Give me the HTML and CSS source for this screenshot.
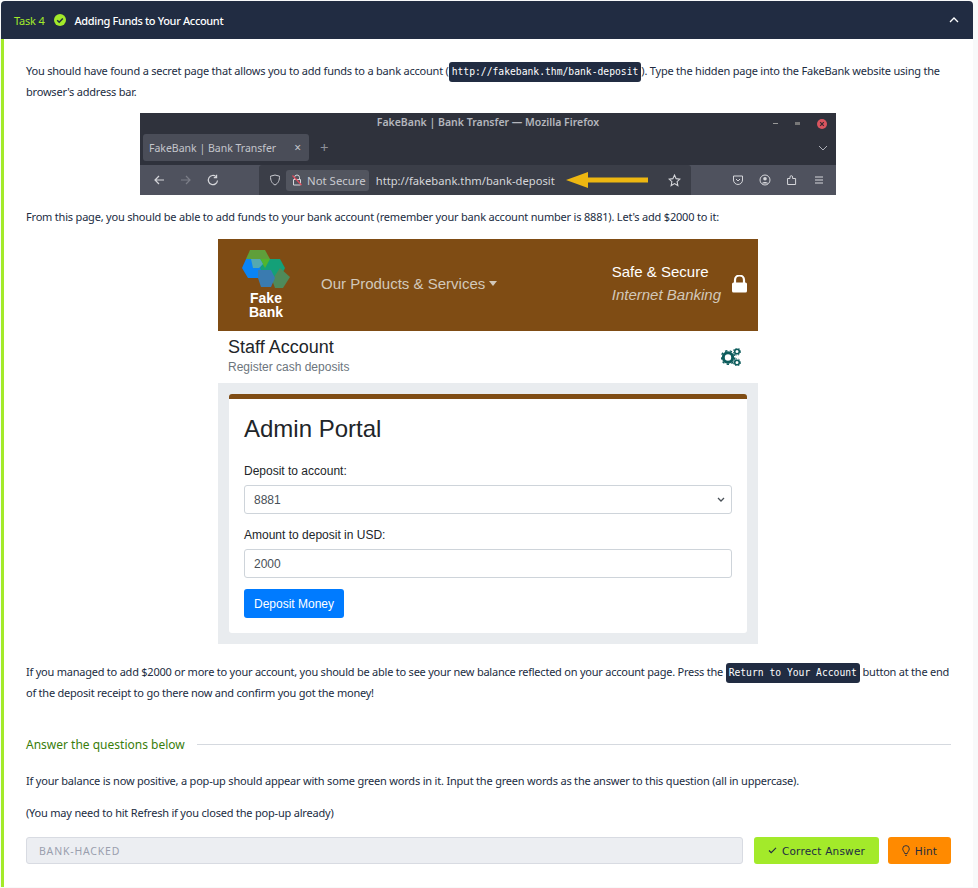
FILE: index.html
```html
<!DOCTYPE html>
<html lang="en">
<head>
    <meta charset="UTF-8">
    <meta name="viewport" content="width=device-width, initial-scale=1.0">
    <title>Task 4 - Adding Funds to Your Account</title>
    <link rel="stylesheet" href="styles.css">
</head>
<body>
    <section class="task">
        <header class="task-head">
            <span class="task-num">Task 4</span>
            <svg class="task-check" viewBox="0 0 12 12"><circle cx="6" cy="6" r="6" fill="#a3ea2a"/><path d="M3.2 6.2l2 2 3.6-3.8" fill="none" stroke="#212c42" stroke-width="1.5"/></svg>
            <span class="task-title">Adding Funds to Your Account</span>
            <svg class="task-chevron" viewBox="0 0 10 6"><path d="M1 5l4-4 4 4" fill="none" stroke="#fff" stroke-width="1.3"/></svg>
        </header>
        <div class="task-body">
            <p class="text text-first">You should have found a secret page that allows you to add funds to a bank account (<code>http://fakebank.thm/bank-deposit</code>). Type the hidden page into the FakeBank website using the browser's address bar.</p>

            <div class="firefox">
                <div class="ff-title">
                    <span class="ff-title-text">FakeBank | Bank Transfer — Mozilla Firefox</span>
                    <div class="ff-winbtns">
                        <i class="ff-min"></i>
                        <i class="ff-max"></i>
                        <svg class="ff-close" viewBox="0 0 10 10"><circle cx="5" cy="5" r="5" fill="#d9555f"/><path d="M3.2 3.2l3.6 3.6M6.8 3.2l-3.6 3.6" stroke="#3a2a30" stroke-width="1.2"/></svg>
                    </div>
                </div>
                <div class="ff-tabs">
                    <div class="ff-tab"><span>FakeBank | Bank Transfer</span><b>×</b></div>
                    <span class="ff-plus">+</span>
                    <svg class="ff-alltabs" viewBox="0 0 10 6"><path d="M1 1l4 4 4-4" fill="none" stroke="#aeb0b8" stroke-width="1"/></svg>
                </div>
                <div class="ff-toolbar">
                    <div class="ff-nav">
                        <svg viewBox="0 0 12 12"><path d="M11 6H2M6 2L2 6l4 4" fill="none" stroke="#d5d6da" stroke-width="1.2"/></svg>
                        <svg viewBox="0 0 12 12"><path d="M1 6h9M6 2l4 4-4 4" fill="none" stroke="#7c7e88" stroke-width="1.2"/></svg>
                        <svg viewBox="0 0 12 12"><path d="M10.5 6.5A4.6 4.6 0 1 1 9 2.6M9.6 0.8v2.8H6.8" fill="none" stroke="#d5d6da" stroke-width="1.2"/></svg>
                    </div>
                    <div class="ff-url">
                        <svg class="ff-shield" viewBox="0 0 12 12"><path d="M6 1l4.5 1.2c0 4-1 7-4.5 8.8C2.500 9.200 1.500 6.200 1.500 2.200z" fill="none" stroke="#c9cad0" stroke-width="1"/></svg>
                        <div class="ff-secure">
                            <svg viewBox="0 0 12 12"><path d="M3.500 5V3.500a2.500 2.500 0 0 1 5 0V5M2.500 5.500h7v5.500h-7z" fill="none" stroke="#d5d6da" stroke-width="1"/><path d="M1.500 1.500l9 9.500" stroke="#e0485a" stroke-width="1.200"/></svg>
                            <span>Not Secure</span>
                        </div>
                        <span class="ff-address">http://fakebank.thm/bank-deposit</span>
                        <svg class="ff-arrow" viewBox="0 0 82 16"><path d="M0 8L22 0v5.500h60v5H22V16z" fill="#eeb711"/></svg>
                        <svg class="ff-star" viewBox="0 0 12 12"><path d="M6 1l1.500 3.300 3.500.4-2.600 2.400.7 3.600L6 8.900l-3.100 1.800.7-3.600L1 4.700l3.500-.4z" fill="none" stroke="#d5d6da" stroke-width="1"/></svg>
                    </div>
                    <div class="ff-tools">
                        <svg viewBox="0 0 12 12"><path d="M1.500 2h9v4a4.500 4.500 0 0 1-9 0z" fill="none" stroke="#d5d6da" stroke-width="1"/><path d="M4 5l2 2 2-2" fill="none" stroke="#d5d6da" stroke-width="1"/></svg>
                        <svg viewBox="0 0 12 12"><circle cx="6" cy="6" r="5" fill="none" stroke="#d5d6da" stroke-width="1"/><circle cx="6" cy="4.800" r="1.800" fill="#d5d6da"/><path d="M2.800 9.500c1-2 5.400-2 6.400 0" fill="#d5d6da"/></svg>
                        <svg viewBox="0 0 12 12"><path d="M1.500 4.500h2.500V3a1.300 1.300 0 0 1 2.600 0v1.500h3v6h-8z" fill="none" stroke="#d5d6da" stroke-width="1"/></svg>
                        <svg viewBox="0 0 12 12"><path d="M2 3h8M2 6h8M2 9h8" stroke="#d5d6da" stroke-width="1.100"/></svg>
                    </div>
                </div>
            </div>

            <p class="text">From this page, you should be able to add funds to your bank account (remember your bank account number is 8881). Let's add $2000 to it:</p>

            <div class="bank">
                <div class="bank-nav">
                    <div class="bank-logo">
                        <svg viewBox="0 0 48 38">
                            <path d="M8 0h15l5 9-5 9H8L4 9z" fill="#5f9f3a"/>
                            <path d="M4 9h17l7 9-5 10H6L0 18z" fill="#0a84f5"/>
                            <path d="M23 9h15l5 9-6 12H23l-5-12z" fill="#14a078"/>
                            <path d="M38 18l10 9-7 11h-8l-3-8z" fill="#4f8a5a"/>
                            <path d="M16 20h13l4 8-4 9H19l-3-9z" fill="#3a7bb0"/>
                            <path d="M18 9h10l-5 9z" fill="#4fb52e"/>
                            <path d="M9 9h9l3 5-4 4h-6z" fill="#55a9b0"/>
                        </svg>
                        <span>Fake<br>Bank</span>
                    </div>
                    <div class="bank-menu">Our Products &amp; Services<i></i></div>
                    <div class="bank-safe">
                        <span>Safe &amp; Secure</span>
                        <em>Internet Banking</em>
                    </div>
                    <svg class="bank-lock" viewBox="0 0 15 18"><path d="M3 8V5a4.500 4.500 0 0 1 9 0v3" fill="none" stroke="#fff" stroke-width="2.200"/><rect y="7.500" width="15" height="10" rx="1.500" fill="#fff"/></svg>
                </div>
                <div class="bank-staff">
                    <div>
                        <div class="staff-title">Staff Account</div>
                        <div class="staff-sub">Register cash deposits</div>
                    </div>
                    <svg class="staff-gears" viewBox="0 0 20 18">
                        <circle cx="7" cy="9.500" r="4.700" fill="none" stroke="#0d5c5c" stroke-width="3"/>
                        <circle cx="7" cy="9.500" r="6.800" fill="none" stroke="#0d5c5c" stroke-width="1.400" stroke-dasharray="2.400 2.400"/>
                        <circle cx="16" cy="3.500" r="2.300" fill="none" stroke="#0d5c5c" stroke-width="1.600"/>
                        <circle cx="16" cy="14.500" r="2.300" fill="none" stroke="#0d5c5c" stroke-width="1.600"/>
                        <circle cx="16" cy="3.500" r="3.600" fill="none" stroke="#0d5c5c" stroke-width="1" stroke-dasharray="1.500 1.500"/>
                        <circle cx="16" cy="14.500" r="3.600" fill="none" stroke="#0d5c5c" stroke-width="1" stroke-dasharray="1.500 1.500"/>
                    </svg>
                </div>
                <div class="bank-panel">
                    <div class="bank-card">
                        <div class="card-title">Admin Portal</div>
                        <div class="card-label">Deposit to account:</div>
                        <div class="card-field">8881<svg viewBox="0 0 8 5"><path d="M1 1l3 3 3-3" fill="none" stroke="#495057" stroke-width="1.300"/></svg></div>
                        <div class="card-label">Amount to deposit in USD:</div>
                        <div class="card-field">2000</div>
                        <div class="card-btn">Deposit Money</div>
                    </div>
                </div>
            </div>

            <p class="text text-tight">If you managed to add $2000 or more to your account, you should be able to see your new balance reflected on your account page. Press the <code>Return to Your Account</code> button at the end of the deposit receipt to go there now and confirm you got the money!</p>

            <div class="answer-head"><span>Answer the questions below</span><i></i></div>

            <p class="text">If your balance is now positive, a pop-up should appear with some green words in it. Input the green words as the answer to this question (all in uppercase).</p>
            <p class="text">(You may need to hit Refresh if you closed the pop-up already)</p>

            <div class="answer-row">
                <div class="answer-input">BANK-HACKED</div>
                <div class="btn btn-correct"><svg viewBox="0 0 10 8"><path d="M1 4l2.500 2.500L9 1" fill="none" stroke="#212c42" stroke-width="1.300"/></svg>Correct Answer</div>
                <div class="btn btn-hint"><svg viewBox="0 0 8 11"><path d="M4 .6a3.300 3.300 0 0 1 3.300 3.300c0 1.700-1.700 2.700-2 4.600H2.700c-.3-1.900-2-2.900-2-4.600A3.300 3.300 0 0 1 4 .6zM3 10.300h2" fill="none" stroke="#212c42" stroke-width=".9"/></svg>Hint</div>
            </div>
        </div>
    </section>
</body>
</html>
```

FILE: styles.css
```css
* {
    box-sizing: border-box;
}
body {
    margin: 0;
    padding: 1px 5px 0 1px;
    background-color: #f8f9fa;
    font-family: "Noto Sans", sans-serif;
    color: #212c42;
}
.task {
    background-color: #fff;
    height: 886px;
}
.task-head {
    height: 38px;
    display: flex;
    align-items: center;
    padding: 0 14px 0 13px;
    background-color: #212c42;
    border-radius: 4px 4px 0 0;
    font-size: 11px;
}
.task-num {
    color: #a3ea2a;
    letter-spacing: -.2px;
}
.task-check {
    width: 12px;
    height: 12px;
    margin-left: 9px;
}
.task-title {
    margin-left: 9px;
    color: #fff;
    letter-spacing: -.35px;
    font-weight: 500;
}
.task-chevron {
    width: 10px;
    height: 6px;
    margin-left: auto;
}
.task-body {
    height: 848px;
    padding: 22px 22px 0 22px;
    border-left: 3px solid #a3ea2a;
}
.text {
    margin: 0 0 12px;
    font-size: 11px;
    line-height: 20px;
    letter-spacing: -.2px;
}
.text-first {
    letter-spacing: -.21px;
}
.text-tight {
    letter-spacing: -.23px;
}
code {
    display: inline-block;
    padding: 0 3px;
    background-color: #212c42;
    color: #fff;
    border-radius: 3px;
    font-family: "DejaVu Sans Mono", monospace;
    font-size: 9.7px;
    line-height: 20px;
    letter-spacing: 0;
    vertical-align: baseline;
}

/* browser window picture */
.firefox {
    width: 696px;
    height: 82px;
    margin: -1px 0 12px 114px;
    background-color: #2f323c;
    color: #c9cad0;
    font-size: 10.5px;
}
.ff-title {
    height: 21px;
    display: flex;
    align-items: center;
    justify-content: flex-end;
    position: relative;
    padding-right: 9px;
}
.ff-title-text {
    position: absolute;
    top: 2px;
    left: 0;
    right: 0;
    text-align: center;
    font-weight: 600;
    color: #b4b6bd;
}
.ff-winbtns {
    display: flex;
    align-items: center;
    gap: 17px;
}
.ff-min {
    width: 5px;
    height: 1px;
    background-color: #999;
}
.ff-max {
    width: 5px;
    height: 3px;
    background-color: #777;
}
.ff-close {
    width: 10px;
    height: 10px;
}
.ff-tabs {
    height: 31px;
    display: flex;
    align-items: flex-start;
    padding: 0 8px 0 3px;
}
.ff-tab {
    width: 166px;
    height: 27px;
    display: flex;
    align-items: center;
    justify-content: space-between;
    padding: 0 8px 0 6px;
    background-color: #4a4d58;
    border-radius: 3px;
    color: #c4c5cb;
}
.ff-tab b {
    font-weight: 400;
    font-size: 12px;
}
.ff-plus {
    margin: 3px 0 0 11px;
    font-size: 15px;
    line-height: 20px;
    color: #8d8f98;
}
.ff-alltabs {
    width: 10px;
    height: 6px;
    margin: 11px 0 0 auto;
}
.ff-toolbar {
    height: 30px;
    display: flex;
    background-color: #4f525e;
}
.ff-nav {
    width: 119px;
    display: flex;
    align-items: center;
    gap: 15px;
    padding-left: 13px;
}
.ff-nav svg, .ff-tools svg {
    width: 12px;
    height: 12px;
}
.ff-url {
    width: 432px;
    display: flex;
    align-items: center;
    padding-left: 10px;
    background-color: #3b3e48;
    border-radius: 3px 3px 0 0;
}
.ff-shield {
    width: 12px;
    height: 12px;
}
.ff-secure {
    height: 21px;
    display: flex;
    align-items: center;
    gap: 4px;
    margin-left: 5px;
    padding: 0 3px 0 5px;
    background-color: #52555f;
    border-radius: 3px;
    font-size: 11.4px;
}
.ff-secure svg {
    width: 12px;
    height: 12px;
}
.ff-address {
    margin-left: 7px;
    width: 190px;
    font-size: 11.2px;
    color: #d5d6da;
}
.ff-arrow {
    width: 82px;
    height: 16px;
}
.ff-star {
    width: 13px;
    height: 13px;
    margin-left: 20px;
}
.ff-tools {
    display: flex;
    align-items: center;
    gap: 15px;
    padding-left: 41px;
}

/* bank page picture */
.bank {
    width: 540px;
    margin: 0 0 18px 192px;
    font-family: "Liberation Sans", sans-serif;
}
.bank-nav {
    height: 92px;
    display: flex;
    align-items: center;
    padding-bottom: 4px;
    background-color: #7f4c14;
}
.bank-logo {
    width: 48px;
    margin: 2px 0 0 24px;
    text-align: center;
    font-size: 14px;
    line-height: 14px;
    font-weight: 700;
    color: #fff;
}
.bank-logo svg {
    display: block;
    width: 48px;
    height: 38px;
    margin-bottom: 3px;
}
.bank-logo span {
    display: block;
}
.bank-menu {
    margin-left: 31px;
    display: flex;
    align-items: center;
    font-size: 15px;
    color: #d2c8ba;
}
.bank-menu i {
    margin-left: 4px;
    border-top: 5px solid #d2c8ba;
    border-left: 4.500px solid transparent;
    border-right: 4.500px solid transparent;
}
.bank-safe {
    margin-left: auto;
    display: flex;
    flex-direction: column;
    gap: 6px;
    font-size: 15px;
    color: #fff;
}
.bank-safe em {
    color: #d2c8ba;
}
.bank-lock {
    width: 15px;
    height: 18px;
    margin: 2px 11px 0 11px;
}
.bank-staff {
    height: 52px;
    display: flex;
    align-items: center;
    justify-content: space-between;
    padding: 0 17px 2px 10px;
}
.staff-title {
    font-size: 18px;
    line-height: 22px;
    color: #212529;
}
.staff-sub {
    margin-top: 1px;
    font-size: 12px;
    line-height: 17px;
    color: #6c757d;
}
.staff-gears {
    width: 20px;
    height: 18px;
    margin-top: 2px;
}
.bank-panel {
    height: 261px;
    padding: 11px;
    background-color: #e9ecef;
}
.bank-card {
    height: 239px;
    padding: 15px;
    background-color: #fff;
    border-top: 5px solid #7f4c14;
    border-radius: 3px;
}
.card-title {
    font-size: 24px;
    line-height: 29px;
    color: #212529;
    margin-bottom: 20px;
}
.card-label {
    font-size: 12px;
    line-height: 17px;
    color: #212529;
    margin-bottom: 5px;
}
.card-field {
    height: 29px;
    display: flex;
    align-items: center;
    justify-content: space-between;
    padding: 0 6px 0 9px;
    margin-bottom: 13px;
    border: 1px solid #ced4da;
    border-radius: 3px;
    font-size: 12px;
    color: #495057;
}
.card-field svg {
    width: 8px;
    height: 5px;
}
.card-btn {
    width: 100px;
    height: 29px;
    margin-top: -2px;
    display: flex;
    align-items: center;
    justify-content: center;
    background-color: #007bff;
    border-radius: 3px;
    font-size: 12px;
    color: #fff;
}

/* answer area */
.answer-head {
    display: flex;
    align-items: center;
    gap: 12px;
    margin: 33px 0 18px;
    font-size: 12px;
    color: #397d0b;
}
.answer-head i {
    flex: 1;
    height: 1px;
    background-color: #d5d9df;
}
.answer-row {
    display: flex;
    margin-top: 14px;
}
.answer-input {
    width: 717px;
    height: 27px;
    display: flex;
    align-items: center;
    padding: 0 12px;
    background-color: #eceef2;
    border: 1px solid #d8dbe2;
    border-radius: 3px;
    font-size: 10.500px;
    letter-spacing: .8px;
    color: #9a9fae;
}
.btn {
    height: 27px;
    display: flex;
    align-items: center;
    justify-content: center;
    border-radius: 3px;
    font-family: "DejaVu Sans", sans-serif;
    font-size: 10.5px;
    letter-spacing: .2px;
}
.btn svg {
    margin-right: 5px;
}
.btn-correct {
    width: 125px;
    margin-left: 11px;
    background-color: #a3ea2a;
}
.btn-correct svg {
    width: 9px;
    height: 7px;
}
.btn-hint {
    width: 63px;
    margin-left: 9px;
    background-color: #ff8a00;
}
.btn-hint svg {
    width: 8px;
    height: 11px;
}
```
